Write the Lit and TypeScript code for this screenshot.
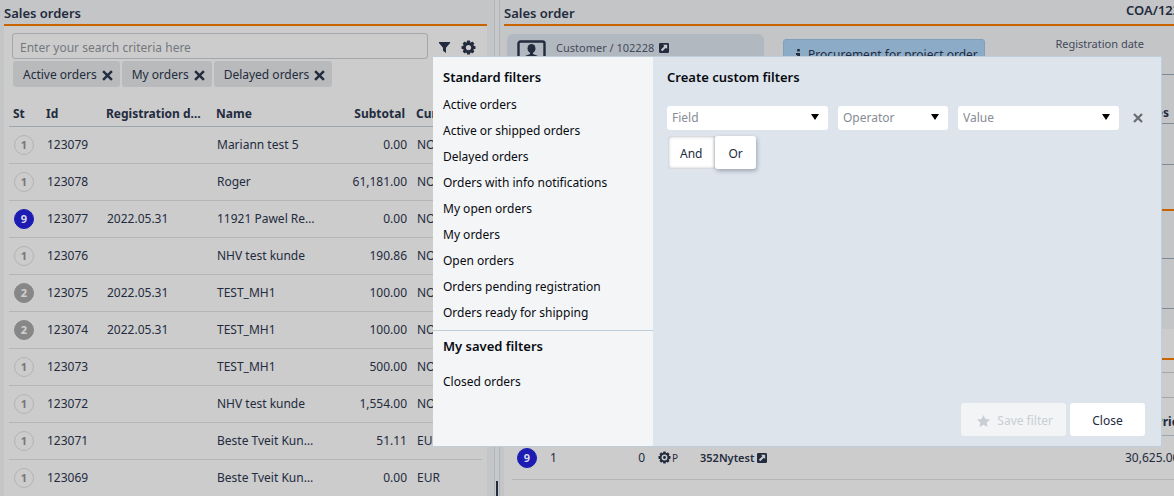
import { LitElement, html, css, svg } from "lit";
import { customElement, state } from "lit/decorators.js";
import { classMap } from "lit/directives/class-map.js";

interface Order {
  st: number;
  id: string;
  date: string;
  name: string;
  subtotal: string;
  currency: string;
}

const ORDERS: Order[] = [
  { st: 1, id: "123079", date: "", name: "Mariann test 5", subtotal: "0.00", currency: "NOK" },
  { st: 1, id: "123078", date: "", name: "Roger", subtotal: "61,181.00", currency: "NOK" },
  { st: 9, id: "123077", date: "2022.05.31", name: "11921 Pawel Re…", subtotal: "0.00", currency: "NOK" },
  { st: 1, id: "123076", date: "", name: "NHV test kunde", subtotal: "190.86", currency: "NOK" },
  { st: 2, id: "123075", date: "2022.05.31", name: "TEST_MH1", subtotal: "100.00", currency: "NOK" },
  { st: 2, id: "123074", date: "2022.05.31", name: "TEST_MH1", subtotal: "100.00", currency: "NOK" },
  { st: 1, id: "123073", date: "", name: "TEST_MH1", subtotal: "500.00", currency: "NOK" },
  { st: 1, id: "123072", date: "", name: "NHV test kunde", subtotal: "1,554.00", currency: "NOK" },
  { st: 1, id: "123071", date: "", name: "Beste Tveit Kun…", subtotal: "51.11", currency: "EUR" },
  { st: 1, id: "123069", date: "", name: "Beste Tveit Kun…", subtotal: "0.00", currency: "EUR" },
];

const STANDARD = [
  "Active orders",
  "Active or shipped orders",
  "Delayed orders",
  "Orders with info notifications",
  "My open orders",
  "My orders",
  "Open orders",
  "Orders pending registration",
  "Orders ready for shipping",
];

const cross = (size: number) => html`<svg width=${size} height=${size} viewBox="0 0 10 10" aria-hidden="true">
  <path d="M1 1L9 9M9 1L1 9" stroke="currentColor" stroke-width="2.2" fill="none" />
</svg>`;

const gear = (size: number, hole: number, dot = 0) => html`<svg width=${size} height=${size} viewBox="0 0 16 16" aria-hidden="true">
  ${[0, 45, 90, 135].map(
    (a) => svg`<rect x="6.3" y="0.6" width="3.4" height="14.8" rx="0.6" fill="currentColor" transform="rotate(${a} 8 8)" />`
  )}
  <circle cx="8" cy="8" r="4.4" fill="none" stroke="currentColor" stroke-width="3" />
  <circle cx="8" cy="8" r=${hole} fill="#cccccc" />
  <circle cx="8" cy="8" r=${dot} fill="currentColor" />
</svg>`;

const external = html`<svg width="10" height="10" viewBox="0 0 11 11" aria-hidden="true">
  <rect width="11" height="11" rx="1.5" fill="currentColor" />
  <path d="M4.4 2h4.6v4.6L7.5 5.1L3.6 9L2 7.4L5.9 3.5z" fill="#cccccc" />
</svg>`;

const shared = css`
  :host {
    display: block;
    font-family: "Noto Sans", "Open Sans", sans-serif;
    font-size: 12px;
    line-height: 20px;
    color: #232b3e;
  }
  * {
    box-sizing: border-box;
  }
  h1,
  h2,
  ul {
    margin: 0;
    padding: 0;
    list-style: none;
  }
  button,
  input,
  select {
    font: inherit;
    color: inherit;
    border: 0;
    background: none;
    padding: 0;
    margin: 0;
  }
  svg {
    display: block;
    flex: none;
  }
  .badge {
    display: flex;
    align-items: center;
    justify-content: center;
    width: 20px;
    height: 20px;
    border-radius: 50%;
    border: 1px solid #b2b4b7;
    font-size: 11px;
    font-weight: 700;
    color: #777777;
  }
  .badge.s9 {
    background: #1c1cb2;
    border-color: #1c1cb2;
    color: #d8d8e8;
  }
  .badge.s2 {
    background: #878787;
    border-color: #878787;
    color: #d0d0d0;
  }
`;

@customElement("order-list")
export class OrderList extends LitElement {
  static styles = [
    shared,
    css`
      .title {
        height: 26px;
        padding-top: 3px;
        border-bottom: 2px solid #c76400;
        font-size: 13px;
        line-height: 20px;
        font-weight: 600;
      }
      .body {
        background: #cccccc;
        padding: 7px 5px 0;
      }
      .search {
        display: flex;
        align-items: center;
        gap: 10px;
        padding: 0 6px 0 3px;
      }
      .search input {
        flex: 1;
        min-width: 0;
        height: 26px;
        padding: 2px 7px 0;
        border: 1px solid #a3a6aa;
        border-radius: 3px;
      }
      .search input::placeholder {
        color: #74787e;
        opacity: 1;
      }
      .search .icon {
        padding-top: 2px;
      }
      .chips {
        display: flex;
        gap: 2px;
        padding: 2px 4px 12px;
      }
      .chip {
        display: flex;
        align-items: center;
        gap: 5px;
        height: 26px;
        padding: 2px 7px 0 10px;
        border-radius: 3px;
        background: #b8babb;
        white-space: nowrap;
      }
      .chip button,
      .icon {
        display: flex;
      }
      table {
        width: 100%;
        table-layout: fixed;
        border-collapse: collapse;
      }
      th,
      td {
        padding: 0 5px;
        text-align: left;
        white-space: nowrap;
        overflow: hidden;
      }
      th {
        height: 27px;
        border-bottom: 1px solid #9ea6ad;
        padding: 3px 7px 0 4px;
        font-weight: 700;
      }
      td {
        height: 37px;
        border-bottom: 1px solid #b3b5b8;
      }
      .num {
        text-align: right;
      }
      .c-st {
        width: 33px;
      }
      .c-id {
        width: 60px;
      }
      .c-date,
      .c-name {
        width: 110px;
      }
      .c-sub {
        width: 90px;
      }
    `,
  ];

  render() {
    return html`
      <h1 class="title">Sales orders</h1>
      <div class="body">
        <div class="search">
          <input type="search" aria-label="Search orders" placeholder="Enter your search criteria here" />
          <button class="icon" aria-label="Filters">
            <svg width="13" height="13" viewBox="0 0 14 14"><path d="M1 1h12v1.2L8.6 7.2V13L5.4 10.6V7.2L1 2.2z" fill="currentColor" /></svg>
          </button>
          <button class="icon" aria-label="Settings">${gear(15, 2.8)}</button>
        </div>
        <div class="chips">
          ${["Active orders", "My orders", "Delayed orders"].map(
            (c) => html`<span class="chip">${c}<button aria-label=${"Remove " + c}>${cross(11)}</button></span>`
          )}
        </div>
        <table>
          <colgroup>
            <col class="c-st" /><col class="c-id" /><col class="c-date" /><col class="c-name" /><col class="c-sub" /><col />
          </colgroup>
          <thead>
            <tr>
              <th>St</th>
              <th>Id</th>
              <th>Registration d…</th>
              <th>Name</th>
              <th class="num">Subtotal</th>
              <th>Curr…</th>
            </tr>
          </thead>
          <tbody>
            ${ORDERS.map(
              (o) => html`<tr>
                <td><span class=${classMap({ badge: true, s9: o.st === 9, s2: o.st === 2 })}>${o.st}</span></td>
                <td>${o.id}</td>
                <td>${o.date}</td>
                <td>${o.name}</td>
                <td class="num">${o.subtotal}</td>
                <td>${o.currency}</td>
              </tr>`
            )}
          </tbody>
        </table>
      </div>
    `;
  }
}

@customElement("order-detail")
export class OrderDetail extends LitElement {
  static styles = [
    shared,
    css`
      .title {
        display: flex;
        height: 26px;
        padding-top: 3px;
        border-bottom: 2px solid #c76400;
        justify-content: space-between;
      }
      .title h1,
      .title span {
        font-size: 13px;
        line-height: 20px;
        font-weight: 600;
      }
      .title span {
        width: 48px;
        line-height: 14px;
        white-space: nowrap;
      }
      .summary {
        display: flex;
        align-items: flex-start;
        height: 49px;
        padding: 8px 0 0 3px;
        border-bottom: 1px solid #7d8a99;
      }
      .customer {
        display: flex;
        gap: 10px;
        width: 257px;
        height: 40px;
        padding: 6px 10px;
        border-radius: 6px;
        background: #b2b8c0;
        color: #434a5a;
        font-size: 11px;
      }
      .customer a {
        display: flex;
        align-items: center;
        gap: 5px;
        height: 16px;
        color: inherit;
        text-decoration: none;
      }
      .customer a svg {
        color: #232b3e;
      }
      .notice {
        display: flex;
        align-items: center;
        gap: 7px;
        height: 31px;
        margin: 5px 0 0 19px;
        padding: 0 6px 0 12px;
        border: 1px solid #7fa0bd;
        border-radius: 3px;
        background: #8cabc7;
        white-space: nowrap;
      }
      .date {
        margin: 0 30px 0 auto;
        color: #434a5a;
        font-size: 11px;
      }
      .section {
        border-bottom: 1px solid #7d8a99;
      }
      .notes {
        height: 49px;
        padding: 28px 5px 0 0;
        text-align: right;
        font-weight: 700;
      }
      .h41 {
        height: 41px;
      }
      .h46 {
        height: 46px;
      }
      .h48 {
        height: 48px;
      }
      .h50 {
        height: 50px;
      }
      .accent {
        border-bottom: 2px solid #c76400;
      }
      .lines {
        margin-top: 20px;
        background: #cccccc;
      }
      .lines .accent {
        height: 31px;
      }
      .bar {
        height: 13px;
        border-bottom: 1px solid #a3a6aa;
      }
      .bar.tall {
        height: 25px;
      }
      .wrap {
        padding-left: 8px;
        overflow: hidden;
      }
      table {
        width: calc(100% + 11px);
        border-collapse: separate;
        border-spacing: 0;
        table-layout: fixed;
      }
      th {
        height: 38px;
        padding: 10px 0 0;
        border-bottom: 1px solid #9ea6ad;
        font-weight: 700;
        text-align: right;
      }
      td {
        height: 44px;
        padding: 0;
        border-bottom: 1px solid #b3b5b8;
        vertical-align: middle;
        white-space: nowrap;
      }
      .flex {
        display: flex;
        align-items: center;
        gap: 3px;
      }
      .bold {
        font-size: 11px;
        font-weight: 600;
      }
      .small {
        font-size: 10px;
        gap: 1px;
      }
      .num {
        text-align: right;
        padding-right: 13px;
      }
      .c1 {
        width: 38px;
      }
      .c2 {
        width: 50px;
      }
      .c3 {
        width: 58px;
      }
      .c4 {
        width: 42px;
      }
      .c6 {
        width: 60px;
      }
      .badge {
        margin-left: 5px;
      }
    `,
  ];

  render() {
    return html`
      <div class="title"><h1>Sales order</h1><span>COA/123077</span></div>
      <div class="summary">
        <div class="customer">
          <svg width="29" height="24" viewBox="0 0 29 24" aria-hidden="true">
            <rect x="1.5" y="1.5" width="26" height="21" rx="2" fill="none" stroke="#232b3e" stroke-width="2.4" />
            <ellipse cx="14.5" cy="8.5" rx="4" ry="4.6" fill="#232b3e" />
            <path d="M13 12h3v2l5 2v3H8v-3l5-2z" fill="#232b3e" />
          </svg>
          <a href="#">Customer / 102228 ${external}</a>
        </div>
        <div class="notice">
          <svg width="5" height="12" viewBox="0 0 5 12" aria-hidden="true">
            <path d="M1.2 0h2.6v2.4H1.2zM0 4h4v6h1v2H0v-2h1.2V6H0z" fill="#232b3e" />
          </svg>
          Procurement for project order
        </div>
        <span class="date">Registration date</span>
      </div>
      <div class="section notes">Notes</div>
      <div class="section h41"></div>
      <div class="accent h46"></div>
      <div class="section h48"></div>
      <div class="section h50"></div>
      <div class="lines">
        <div class="accent"></div>
        <div class="bar"></div>
        <div class="bar tall"></div>
        <div class="wrap">
          <table>
            <colgroup>
              <col class="c1" /><col class="c2" /><col class="c3" /><col class="c4" /><col /><col class="c6" />
            </colgroup>
            <thead>
              <tr><th></th><th></th><th></th><th></th><th></th><th>Price</th></tr>
            </thead>
            <tbody>
              <tr>
                <td><span class="badge s9">9</span></td>
                <td>1</td>
                <td class="num">0</td>
                <td><span class="flex small">${gear(13, 3.6, 1.8)}P</span></td>
                <td><span class="flex bold">352Nytest ${external}</span></td>
                <td>30,625.00</td>
              </tr>
            </tbody>
          </table>
        </div>
      </div>
    `;
  }
}

@customElement("filter-dialog")
export class FilterDialog extends LitElement {
  @state() private join = "And";

  static styles = [
    shared,
    css`
      .dialog {
        display: flex;
        min-height: 391px;
        border: 1px solid #bfcedb;
        border-width: 1px 1px 1px 0;
        color: #080a10;
      }
      .side {
        width: 220px;
        background: #f3f5f7;
      }
      section {
        padding: 10px 10px 4px;
      }
      section + section {
        padding-top: 5px;
        border-top: 1px solid #bfcedb;
      }
      h2 {
        font-size: 13px;
        line-height: 20px;
        font-weight: 600;
      }
      ul {
        margin-top: 5px;
      }
      section + section ul {
        margin-top: 13px;
      }
      li button {
        display: block;
        height: 26px;
        white-space: nowrap;
      }
      .main {
        display: flex;
        flex-direction: column;
        flex: 1;
        min-width: 0;
        padding: 10px 16px 10px 14px;
        background: #dde4ec;
      }
      .rule {
        display: grid;
        grid-template-columns: 161fr 110fr 161fr 16px;
        gap: 10px;
        align-items: center;
        margin-top: 19px;
      }
      .pick {
        display: grid;
        align-items: center;
      }
      .pick > * {
        grid-area: 1 / 1;
      }
      .pick select {
        appearance: none;
        width: 100%;
        height: 24px;
        padding: 0 24px 0 5px;
        border-radius: 3px;
        background: #ffffff;
        color: #868c96;
      }
      .pick svg {
        justify-self: end;
        margin: 0 9px 2px 0;
        pointer-events: none;
      }
      .remove {
        display: flex;
        justify-content: center;
        padding-left: 2px;
        color: #686c72;
      }
      .join {
        display: flex;
        margin: 6px 0 0 1px;
      }
      .join button {
        height: 33px;
        padding: 2px 13px 0;
        border-radius: 3px;
        background: #ffffff;
        color: #232b3e;
        box-shadow: 1px 2px 4px rgba(60, 70, 90, 0.4);
      }
      .join .on {
        padding: 2px 13px 0 12px;
        border-radius: 3px 0 0 3px;
        box-shadow: inset 0 0 3px 1px #c4c8ce;
      }
      .actions {
        display: flex;
        justify-content: flex-end;
        gap: 4px;
        margin-top: auto;
      }
      .actions button {
        display: flex;
        align-items: center;
        justify-content: center;
        gap: 7px;
        height: 33px;
        min-width: 75px;
        padding: 2px 12px 0;
        border-radius: 3px;
        background: #ffffff;
        color: #232b3e;
      }
      .actions button:disabled {
        padding: 2px 13px 0 16px;
        background: #f2f4f6;
        color: #c9ced4;
      }
    `,
  ];

  private pick(label: string) {
    return html`<label class="pick">
      <select aria-label=${label}>
        <option>${label}</option>
      </select>
      <svg width="8" height="6" viewBox="0 0 8 6" aria-hidden="true"><path d="M0 0h8L4 6z" fill="#000000" /></svg>
    </label>`;
  }

  render() {
    return html`
      <div class="dialog" role="dialog" aria-label="Filters">
        <div class="side">
          <section>
            <h2>Standard filters</h2>
            <ul>
              ${STANDARD.map((f) => html`<li><button>${f}</button></li>`)}
            </ul>
          </section>
          <section>
            <h2>My saved filters</h2>
            <ul>
              <li><button>Closed orders</button></li>
            </ul>
          </section>
        </div>
        <div class="main">
          <h2>Create custom filters</h2>
          <div class="rule">
            ${["Field", "Operator", "Value"].map((l) => this.pick(l))}
            <button class="remove" aria-label="Remove rule">${cross(10)}</button>
          </div>
          <div class="join">
            ${["And", "Or"].map(
              (j) => html`<button class=${classMap({ on: this.join === j })} @click=${() => (this.join = j)}>${j}</button>`
            )}
          </div>
          <div class="actions">
            <button disabled>
              <svg width="13" height="12" viewBox="0 0 13 12" aria-hidden="true">
                <path d="M6.5 0L8.4 4L13 4.6L9.7 7.6L10.5 12L6.5 9.8L2.5 12L3.3 7.6L0 4.6L4.6 4z" fill="currentColor" />
              </svg>
              Save filter
            </button>
            <button>Close</button>
          </div>
        </div>
      </div>
    `;
  }
}

@customElement("app-root")
export class AppRoot extends LitElement {
  static styles = [
    shared,
    css`
      :host {
        position: relative;
        height: 100vh;
        overflow: hidden;
        background: #c4c5c7;
      }
      .page {
        display: grid;
        grid-template-columns: 483px 17px minmax(0, 1fr);
        grid-template-rows: minmax(0, 1fr);
        height: 100%;
        padding-left: 4px;
      }
      order-detail {
        background: linear-gradient(#c4c5c7 329px, #cccccc 329px);
      }
      .splitter {
        display: flex;
        align-items: flex-end;
        justify-content: center;
        width: 6px;
        margin-left: 7px;
        border: 1px solid #b0b3b8;
        border-width: 0 1px;
        background: #c7c8ca;
      }
      .grip {
        width: 2px;
        height: 15px;
        background: #232b3e;
      }
      filter-dialog {
        position: absolute;
        left: 433px;
        right: 12px;
        top: 56px;
      }
    `,
  ];

  render() {
    return html`
      <div class="page">
        <order-list></order-list>
        <div class="splitter"><div class="grip"></div></div>
        <order-detail></order-detail>
      </div>
      <filter-dialog></filter-dialog>
    `;
  }
}
